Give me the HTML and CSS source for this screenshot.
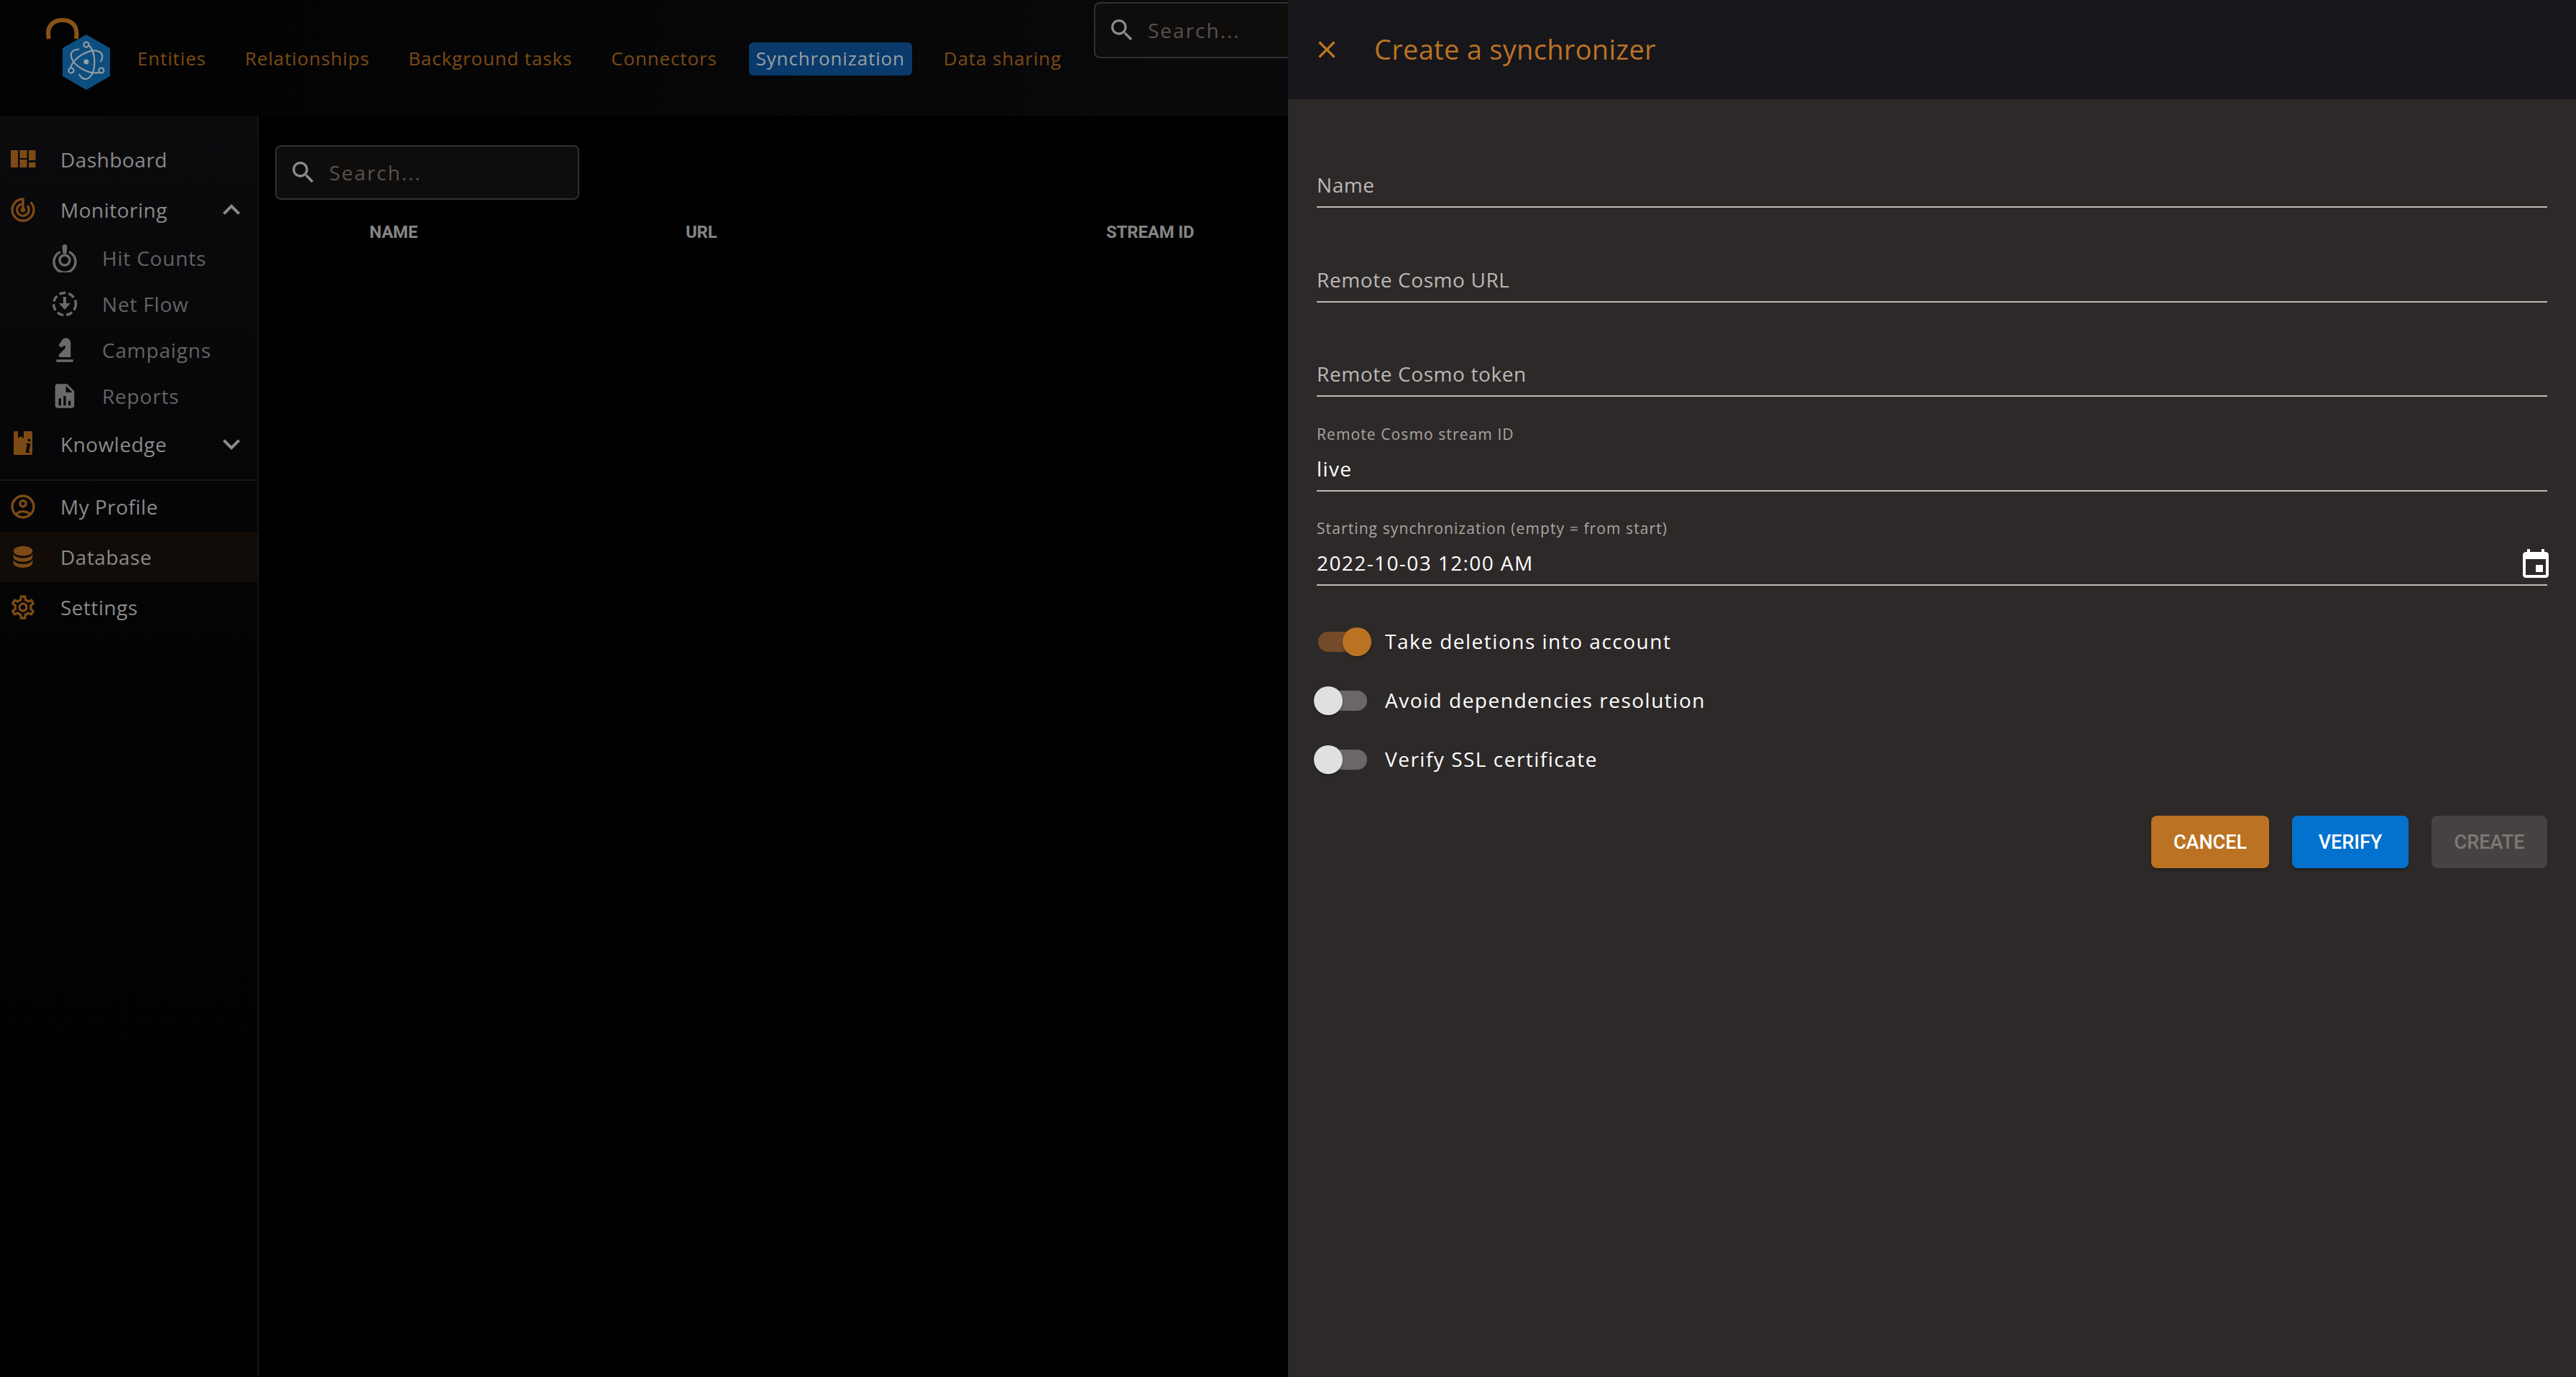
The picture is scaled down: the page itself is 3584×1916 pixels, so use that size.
FILE: index.html
```html
<!DOCTYPE html>
<html>

<head>
	<meta charset="UTF-8">
	<title>Synchronization</title>
	<link rel="stylesheet" href="styles.css">
</head>

<body>
	<svg class="sprites" width="0" height="0">
		<symbol id="i-search" viewBox="0 0 24 24"><path d="M15.5 14h-.79l-.28-.27C15.41 12.59 16 11.11 16 9.5 16 5.91 13.09 3 9.5 3S3 5.91 3 9.5 5.91 16 9.5 16c1.61 0 3.09-.59 4.23-1.57l.27.28v.79l5 4.99L20.49 19l-4.99-5zm-6 0C7.01 14 5 11.99 5 9.5S7.01 5 9.5 5 14 7.01 14 9.5 11.99 14 9.5 14z"/></symbol>
	</svg>

	<div class="app">
		<header class="topbar">
			<svg class="logo" viewBox="0 0 181 161" width="181" height="161">
				<path class="shackle" d="M68 54 C64 36 74 28 87 28 C100 28 109 36 106 54"/>
				<polygon class="hexagon" points="120,48 153,67 153,106 120,125 87,106 87,67"/>
				<g class="atom">
					<path id="orbit" d="M124 63 C134 74 134 100 124 108 C118 113 112 108 110 103"/>
					<use href="#orbit" transform="rotate(120 120 86)"/>
					<use href="#orbit" transform="rotate(240 120 86)"/>
					<circle class="atom-node" cx="120" cy="62" r="3.500"/>
					<circle class="atom-node" cx="99" cy="98" r="3.500"/>
					<circle class="atom-node" cx="141" cy="98" r="3.500"/>
					<circle class="atom-core" cx="120" cy="86" r="3.500"/>
				</g>
			</svg>
			<nav class="topnav">
				<a>Entities</a>
				<a>Relationships</a>
				<a>Background tasks</a>
				<a>Connectors</a>
				<a class="active">Synchronization</a>
				<a>Data sharing</a>
			</nav>
			<div class="search search-top">
				<svg class="search-icon"><use href="#i-search"/></svg>
				<span>Search...</span>
			</div>
		</header>

		<div class="below">
			<aside class="sidebar">
				<a class="item">
					<svg class="ico orange" viewBox="0 0 40 40"><path d="M3 7h10v24H3zM15.500 7h10v11h-10zM15.500 20h10v11h-10zM28 7h9.500v14H28zM28 24h9.500v7H28z"/></svg>
					<span>Dashboard</span>
				</a>
				<a class="item">
					<svg class="ico orange" viewBox="0 0 24 24"><path d="M19.07,4.93L17.66,6.34C19.1,7.79 20,9.79 20,12A8,8 0 0,1 12,20A8,8 0 0,1 4,12C4,7.92 7.05,4.56 11,4.07V6.09C8.16,6.57 6,9.03 6,12A6,6 0 0,0 12,18A6,6 0 0,0 18,12C18,10.34 17.33,8.84 16.24,7.76L14.83,9.17C15.55,9.9 16,10.9 16,12A4,4 0 0,1 12,16A4,4 0 0,1 8,12C8,10.14 9.28,8.59 11,8.14V10.28C10.4,10.63 10,11.26 10,12A2,2 0 0,0 12,14A2,2 0 0,0 14,12C14,11.26 13.6,10.62 13,10.28V2H12A10,10 0 0,0 2,12A10,10 0 0,0 12,22A10,10 0 0,0 22,12C22,9.24 20.88,6.74 19.07,4.93Z"/></svg>
					<span>Monitoring</span>
					<svg class="chevron" viewBox="0 0 24 24"><path d="M12 8l-6 6 1.410 1.410L12 10.830l4.590 4.580L18 14z"/></svg>
				</a>
				<a class="subitem">
					<svg class="ico grey" viewBox="0 0 40 40"><path d="M20 1c2 0 3.500 1.500 3.500 4l-1 9h-5l-1-9c0-2.500 1.500-4 3.500-4z"/><path class="ico-line" d="M14 11.500a15 15 0 1 0 12 0"/><circle class="ico-line" cx="20" cy="23" r="7"/></svg>
					<span>Hit Counts</span>
				</a>
				<a class="subitem">
					<svg class="ico grey" viewBox="0 0 40 40"><circle class="ico-line ico-dash" cx="20" cy="20" r="15.500"/><path d="M18 10h4v9h6l-8 9-8-9h6z"/></svg>
					<span>Net Flow</span>
				</a>
				<a class="subitem">
					<svg class="ico grey" viewBox="0 0 24 24"><path d="M19,22H5V20H19V22M13,2V2C11.75,2 10.58,2.62 9.89,3.66L7,8L9,10L11.06,8.63C11.5,8.32 12.14,8.44 12.45,8.9C12.47,8.93 12.5,8.96 12.5,9V9C12.8,9.59 12.69,10.3 12.22,10.77L7.42,15.57C6.87,16.13 6.87,17.03 7.43,17.58C7.69,17.84 8.05,18 8.42,18H17V6A4,4 0 0,0 13,2Z"/></svg>
					<span>Campaigns</span>
				</a>
				<a class="subitem">
					<svg class="ico grey" viewBox="0 0 24 24"><path d="M13,9H18.5L13,3.5V9M6,2H14L20,8V20A2,2 0 0,1 18,22H6C4.89,22 4,21.1 4,20V4C4,2.89 4.89,2 6,2M7,20H9V14H7V20M11,20H13V12H11V20M15,20H17V16H15V20Z"/></svg>
					<span>Reports</span>
				</a>
				<a class="item">
					<svg class="ico orange" viewBox="0 0 40 40"><path fill-rule="evenodd" d="M7 4q0-2 2-2h4v10l4-3 4 3V2h10q2 0 2 2v29q0 2-2 2H9q-2 0-2-2zM28.500 12.500a2 2 0 1 0 .01 0zM24.500 19l-.3 1.500h1.800L23.500 32h6l.3-1.500h-1.800L30.500 19z"/></svg>
					<span>Knowledge</span>
					<svg class="chevron" viewBox="0 0 24 24"><path d="M16.590 8.590 12 13.170 7.410 8.590 6 10l6 6 6-6z"/></svg>
				</a>
				<div class="divider"></div>
				<a class="item">
					<svg class="ico orange" viewBox="0 0 24 24"><path d="M12 2C6.48 2 2 6.48 2 12s4.48 10 10 10 10-4.48 10-10S17.52 2 12 2zM7.35 18.5C8.66 17.56 10.26 17 12 17s3.34.56 4.65 1.5c-1.31.94-2.91 1.5-4.65 1.5s-3.34-.56-4.65-1.5zm10.79-1.38C16.45 15.8 14.32 15 12 15s-4.45.8-6.14 2.12C4.7 15.73 4 13.95 4 12c0-4.42 3.58-8 8-8s8 3.58 8 8c0 1.95-.7 3.73-1.86 5.12z"/><path d="M12 6c-1.93 0-3.5 1.57-3.5 3.5S10.07 13 12 13s3.5-1.57 3.5-3.5S13.93 6 12 6zm0 5c-.83 0-1.5-.67-1.5-1.5S11.17 8 12 8s1.5.67 1.5 1.5S12.83 11 12 11z"/></svg>
					<span>My Profile</span>
				</a>
				<a class="item selected">
					<svg class="ico orange" viewBox="0 0 24 24"><path d="M12,3C7.58,3 4,4.79 4,7C4,9.21 7.58,11 12,11C16.42,11 20,9.21 20,7C20,4.79 16.42,3 12,3M4,9V12C4,14.21 7.58,16 12,16C16.42,16 20,14.21 20,12V9C20,11.21 16.42,13 12,13C7.58,13 4,11.21 4,9M4,14V17C4,19.21 7.58,21 12,21C16.42,21 20,19.21 20,17V14C20,16.21 16.42,18 12,18C7.58,18 4,16.21 4,14Z"/></svg>
					<span>Database</span>
				</a>
				<a class="item">
					<svg class="ico orange" viewBox="0 0 24 24"><path d="M12,8A4,4 0 0,1 16,12A4,4 0 0,1 12,16A4,4 0 0,1 8,12A4,4 0 0,1 12,8M12,10A2,2 0 0,0 10,12A2,2 0 0,0 12,14A2,2 0 0,0 14,12A2,2 0 0,0 12,10M10,22C9.75,22 9.54,21.82 9.5,21.58L9.13,18.93C8.5,18.68 7.96,18.34 7.44,17.94L4.95,18.95C4.73,19.03 4.46,18.95 4.34,18.73L2.34,15.27C2.21,15.05 2.27,14.78 2.46,14.63L4.57,12.97L4.5,12L4.57,11L2.46,9.37C2.27,9.22 2.21,8.95 2.34,8.73L4.34,5.27C4.46,5.05 4.73,4.96 4.95,5.05L7.44,6.05C7.96,5.66 8.5,5.32 9.13,5.07L9.5,2.42C9.54,2.18 9.75,2 10,2H14C14.25,2 14.46,2.18 14.5,2.42L14.87,5.07C15.5,5.32 16.04,5.66 16.56,6.05L19.05,5.05C19.27,4.96 19.54,5.05 19.66,5.27L21.66,8.73C21.79,8.95 21.73,9.22 21.54,9.37L19.43,11L19.5,12L19.43,13L21.54,14.63C21.73,14.78 21.79,15.05 21.66,15.27L19.66,18.73C19.54,18.95 19.27,19.04 19.05,18.95L16.56,17.95C16.04,18.34 15.5,18.68 14.87,18.93L14.5,21.58C14.46,21.82 14.25,22 14,22H10M11.25,4L10.88,6.61C9.68,6.86 8.62,7.5 7.85,8.39L5.44,7.35L4.69,8.65L6.8,10.2C6.4,11.37 6.4,12.64 6.8,13.8L4.68,15.36L5.43,16.66L7.86,15.62C8.63,16.5 9.68,17.14 10.87,17.38L11.24,20H12.76L13.13,17.39C14.32,17.14 15.37,16.5 16.14,15.62L18.57,16.66L19.32,15.36L17.2,13.81C17.6,12.64 17.6,11.37 17.2,10.2L19.31,8.65L18.56,7.35L16.15,8.39C15.38,7.5 14.32,6.86 13.12,6.62L12.75,4H11.25Z"/></svg>
					<span>Settings</span>
				</a>
			</aside>

			<main class="content">
				<div class="search search-main">
					<svg class="search-icon"><use href="#i-search"/></svg>
					<span>Search...</span>
				</div>
				<div class="table-head">
					<span class="col-name">Name</span>
					<span class="col-url">Url</span>
					<span class="col-stream">Stream ID</span>
				</div>
			</main>
		</div>
	</div>

	<section class="drawer">
		<div class="drawer-head">
			<svg class="close" viewBox="0 0 24 24"><path d="M19 6.410 17.590 5 12 10.590 6.410 5 5 6.410 10.590 12 5 17.590 6.410 19 12 13.410 17.590 19 19 17.590 13.410 12z"/></svg>
			<h2>Create a synchronizer</h2>
		</div>
		<form class="drawer-body">
			<div class="field"><div class="value placeholder">Name</div></div>
			<div class="field"><div class="value placeholder">Remote Cosmo URL</div></div>
			<div class="field"><div class="value placeholder">Remote Cosmo token</div></div>
			<div class="field">
				<label>Remote Cosmo stream ID</label>
				<div class="value">live</div>
			</div>
			<div class="field">
				<label>Starting synchronization (empty = from start)</label>
				<div class="value">2022-10-03 12:00 AM</div>
				<svg class="calendar" viewBox="0 0 24 24"><path d="M17 12h-5v5h5v-5zM16 1v2H8V1H6v2H5c-1.110 0-1.990.9-1.990 2L3 19c0 1.100.89 2 2 2h14c1.100 0 2-.9 2-2V5c0-1.100-.9-2-2-2h-1V1h-2zm3 18H5V8h14v11z"/></svg>
			</div>

			<div class="toggles">
				<div class="toggle-row on"><span class="toggle"><i></i></span><span class="toggle-text">Take deletions into account</span></div>
				<div class="toggle-row"><span class="toggle"><i></i></span><span class="toggle-text">Avoid dependencies resolution</span></div>
				<div class="toggle-row"><span class="toggle"><i></i></span><span class="toggle-text">Verify SSL certificate</span></div>
			</div>

			<div class="buttons">
				<button type="button" class="btn btn-cancel">Cancel</button>
				<button type="button" class="btn btn-verify">Verify</button>
				<button type="button" class="btn btn-create">Create</button>
			</div>
		</form>
	</section>
</body>

</html>
```

FILE: styles.css
```css
* {
	box-sizing: border-box;
}

html,
body {
	margin: 0;
	padding: 0;
	width: 3584px;
	height: 1916px;
	overflow: hidden;
	background: #000000;
	font-family: "Open Sans", "Noto Sans", sans-serif;
}

.sprites {
	display: none;
}

.app {
	display: flex;
	flex-direction: column;
	height: 100%;
}

/* top bar */
.topbar {
	flex: none;
	height: 161px;
	display: flex;
	align-items: flex-start;
	position: relative;
	overflow: hidden;
	background: linear-gradient(90deg, #020203 0%, #101113 100%);
}

.logo {
	flex: none;
}

.shackle {
	fill: none;
	stroke: #8a5316;
	stroke-width: 6;
}

.hexagon {
	fill: #0d4e80;
}

.atom {
	fill: none;
	stroke: #9aa0a3;
	stroke-width: 2;
}

.atom-node {
	fill: #0d4e80;
}

.atom-core {
	fill: #9aa0a3;
	stroke: none;
}

.topnav {
	display: flex;
	gap: 34px;
	margin-top: 59px;
}

.topnav a {
	height: 46px;
	line-height: 44px;
	padding: 0 10px;
	border-radius: 6px;
	font-size: 26px;
	letter-spacing: .85px;
	color: #7c4a14;
	white-space: nowrap;
}

.topnav a.active {
	background: #093a6b;
	color: #9a9fa3;
}

/* search boxes */
.search {
	display: flex;
	align-items: center;
	border: 2px solid #333130;
	border-radius: 8px;
	background: #0f0d0c;
	color: #56524f;
	font-size: 28px;
	letter-spacing: 2px;
}

.search-icon {
	flex: none;
	width: 40px;
	height: 40px;
	margin: 0 16px 0 17px;
	fill: #8b8b8b;
}

.search-top {
	position: absolute;
	left: 1522px;
	top: 3px;
	width: 422px;
	height: 78px;
}

.search-main {
	width: 423px;
	height: 76px;
}

/* left column */
.below {
	flex: 1;
	display: flex;
	min-height: 0;
}

.sidebar {
	flex: none;
	width: 360px;
	padding-top: 26px;
	border-right: 2px solid #151515;
	background: linear-gradient(180deg, #0b0b0e 0%, #030304 45%, #000000 100%);
}

.item,
.subitem {
	display: flex;
	align-items: center;
	font-size: 28px;
	letter-spacing: .5px;
	white-space: nowrap;
}

.item {
	height: 70px;
	padding-left: 12px;
}

.item span {
	margin-left: 32px;
	color: #8a8a8a;
}

.subitem {
	height: 64px;
	padding-left: 70px;
	letter-spacing: .8px;
	color: #636363;
}

.subitem span {
	margin-left: 32px;
}

.item.selected {
	background: #110c07;
}

.ico {
	flex: none;
	width: 40px;
	height: 40px;
}

.ico.orange {
	fill: #7d4a15;
}

.ico.grey {
	fill: #6a6a6a;
}

.ico-line {
	fill: none;
	stroke: #6a6a6a;
	stroke-width: 3.500;
}

.ico-dash {
	stroke-dasharray: 9 4;
}

.chevron {
	width: 48px;
	height: 48px;
	margin-left: auto;
	margin-right: 12px;
	fill: #8a8a8a;
}

.divider {
	height: 2px;
	margin: 14px 0 1px;
	background: #171717;
}

/* list */
.content {
	flex: 1;
	padding: 41px 23px;
	background: #000000;
}

.table-head {
	display: flex;
	margin-top: 31px;
	padding-left: 131px;
	color: #858585;
	font-family: "Roboto", sans-serif;
	font-size: 24px;
	font-weight: 700;
	letter-spacing: -.2px;
	text-transform: uppercase;
}

.col-name {
	width: 440px;
}

.col-url {
	width: 585px;
}

/* drawer */
.drawer {
	position: absolute;
	top: 0;
	right: 0;
	bottom: 0;
	width: 1792px;
	background: #2d2929;
}

.drawer-head {
	height: 138px;
	display: flex;
	align-items: center;
	padding-left: 34px;
	background: #16161b;
}

.close {
	width: 40px;
	height: 40px;
	fill: #c0761f;
}

.drawer-head h2 {
	margin: 0 0 3px 46px;
	font-size: 38px;
	font-weight: 400;
	letter-spacing: .3px;
	color: #bb7323;
}

.drawer-body {
	padding: 19.500px 40px 0;
}

.field {
	position: relative;
	height: 112px;
	margin-top: 19.500px;
	display: flex;
	flex-direction: column;
	justify-content: flex-end;
	border-bottom: 2px solid #bfbbb8;
}

.field label {
	margin-bottom: 10px;
	font-size: 21px;
	line-height: 24px;
	letter-spacing: 1.100px;
	color: #a9a5a2;
}

.value {
	height: 56px;
	line-height: 52px;
	font-size: 28px;
	letter-spacing: 1.400px;
	color: #ffffff;
}

.value.placeholder {
	letter-spacing: .6px;
	color: #bcb8b5;
}

.calendar {
	position: absolute;
	right: -8px;
	bottom: 3px;
	width: 48px;
	height: 48px;
	fill: #ffffff;
}

.toggles {
	margin-top: 37px;
}

.toggle-row {
	height: 82px;
	display: flex;
	align-items: center;
	font-size: 28px;
	letter-spacing: 1.500px;
	color: #ffffff;
}

.toggle-text {
	margin-top: -3px;
}

.toggle {
	position: relative;
	flex: none;
	width: 68px;
	height: 28px;
	margin: 0 25px 0 2px;
	border-radius: 14px;
	background: #6b6766;
}

/* the thumb hangs over the track */
.toggle i {
	position: absolute;
	left: -6px;
	top: -6px;
	width: 40px;
	height: 40px;
	border-radius: 50%;
	background: #e0e0e0;
	box-shadow: 0 2px 3px rgba(0, 0, 0, .3);
}

.toggle-row.on .toggle {
	background: #744b28;
}

.toggle-row.on .toggle i {
	left: 34px;
	background: #bb7323;
}

.buttons {
	display: flex;
	justify-content: flex-end;
	gap: 32px;
	margin-top: 37px;
}

.btn {
	height: 73px;
	border: 0 none;
	border-radius: 8px;
	font-family: "Roboto", sans-serif;
	font-size: 27px;
	font-weight: 500;
	text-transform: uppercase;
	color: #ffffff;
	box-shadow: 0 3px 3px rgba(0, 0, 0, .25);
}

.btn-cancel {
	width: 164px;
	background: #bb7323;
}

.btn-verify {
	width: 162px;
	background: #0372cf;
}

.btn-create {
	width: 161px;
	background: #474241;
	color: #7d7977;
	box-shadow: none;
}
```
